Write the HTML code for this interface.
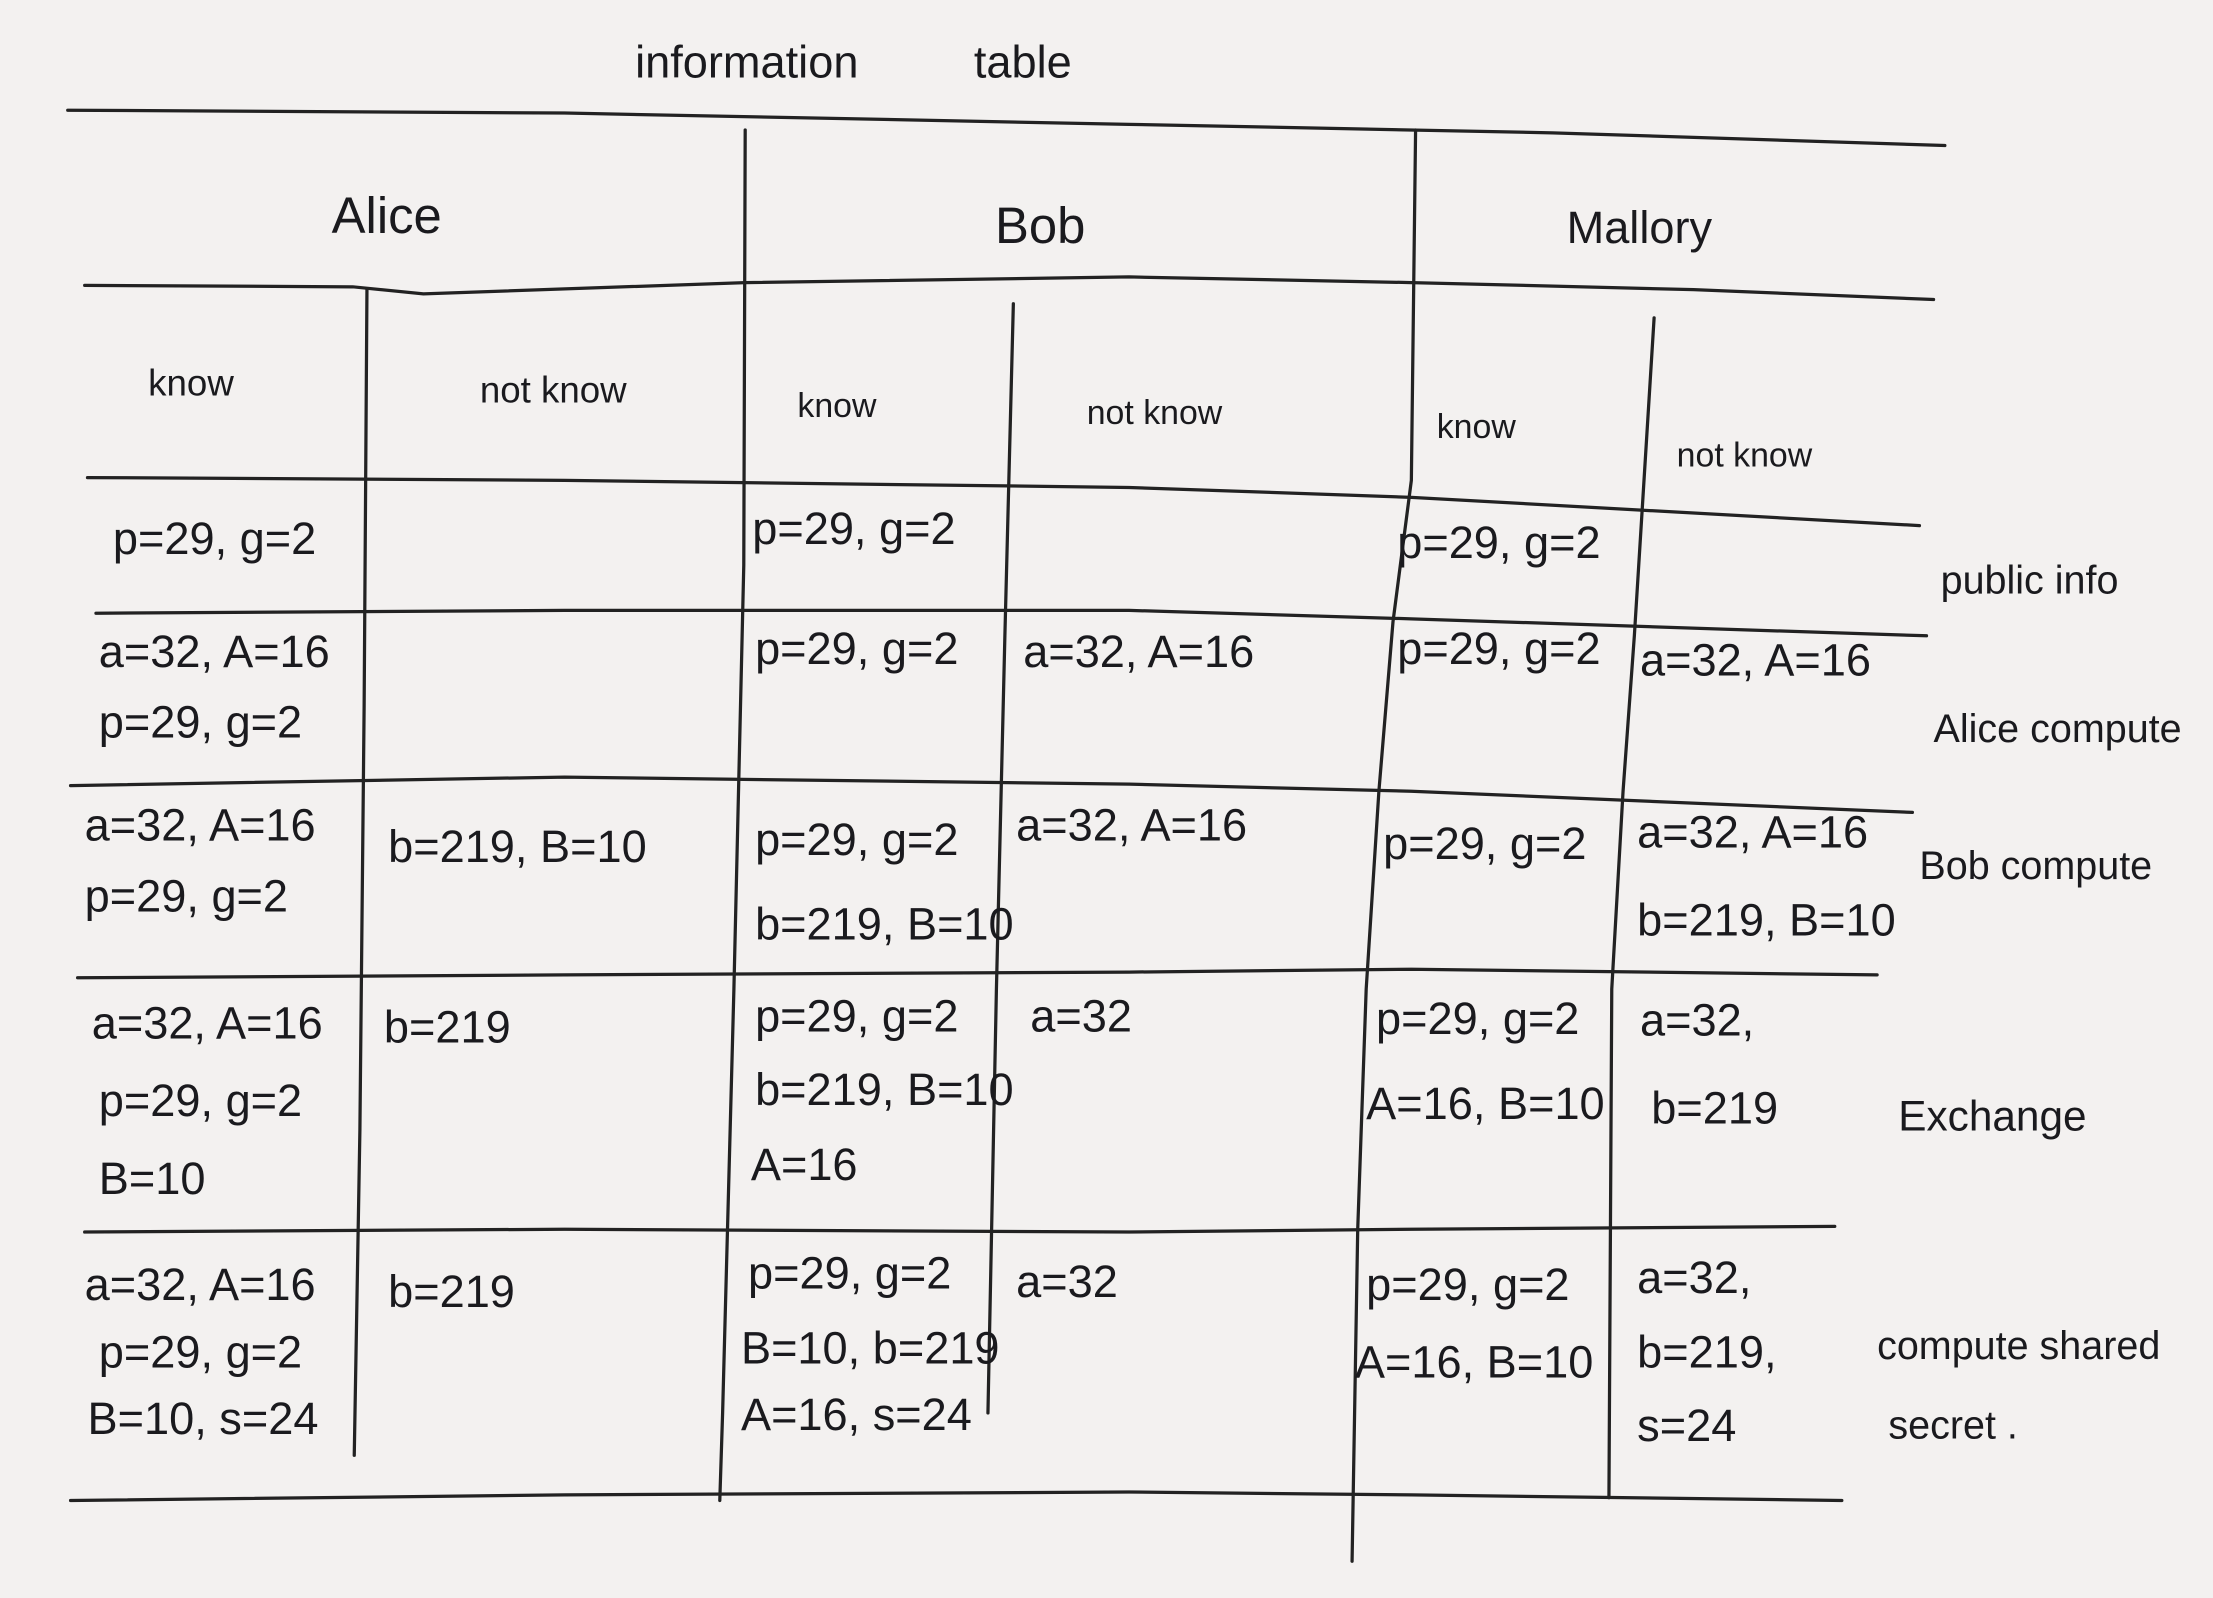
<!DOCTYPE html>
<html><head><meta charset="utf-8"><style>
html,body{margin:0;padding:0;background:#f3f1f0;}
svg{display:block}
text{font-family:"Liberation Sans",sans-serif;fill:#1a1a1e;}
</style></head><body>
<svg width="2213" height="1598" viewBox="0 0 1568 1131" preserveAspectRatio="none" xmlns="http://www.w3.org/2000/svg">
<rect width="1568" height="1131" fill="#f3f1f0"/>
<g stroke="#222" stroke-width="2.3" fill="none" stroke-linecap="round">
<polyline points="48,78 400,80 800,88 1100,94 1378,103"/>
<polyline points="60,202 250,203 300,208 528,200 800,196 1000,200 1200,205 1370,212"/>
<polyline points="62,338 400,340 800,345 1000,352 1360,372"/>
<polyline points="68,434 400,432 800,432 1000,438 1365,450"/>
<polyline points="50,556 400,550 800,555 1000,560 1355,575"/>
<polyline points="55,692 400,690 800,688 1000,686 1330,690"/>
<polyline points="60,872 400,870 800,872 1000,870 1300,868"/>
<polyline points="50,1062 400,1058 800,1056 1000,1058 1305,1062"/>
<polyline points="528,92 527,400 520,700 512,1000 510,1062"/>
<polyline points="1003,92 1000,340 987,440 977,560 968,700 962,870 958,1105"/>
<polyline points="260,205 258,500 255,800 251,1030"/>
<polyline points="718,215 712,450 706,700 700,1000"/>
<polyline points="1172,225 1158,450 1150,560 1142,700 1140,1060"/>
</g>
<g font-size="32">
<text x="450" y="55">information</text><text x="690" y="55">table</text>
<text x="235" y="165" font-size="36">Alice</text>
<text x="705" y="172" font-size="36">Bob</text>
<text x="1110" y="172" font-size="32">Mallory</text>
<text x="105" y="280" font-size="26">know</text>
<text x="340" y="285" font-size="26">not know</text>
<text x="565" y="295" font-size="24">know</text>
<text x="770" y="300" font-size="24">not know</text>
<text x="1018" y="310" font-size="24">know</text>
<text x="1188" y="330" font-size="24">not know</text>
<text x="80" y="392">p=29, g=2</text>
<text x="533" y="385">p=29, g=2</text>
<text x="990" y="395">p=29, g=2</text>
<text x="1375" y="420" font-size="28">public info</text>
<text x="70" y="472">a=32, A=16</text>
<text x="70" y="522">p=29, g=2</text>
<text x="535" y="470">p=29, g=2</text>
<text x="725" y="472">a=32, A=16</text>
<text x="990" y="470">p=29, g=2</text>
<text x="1162" y="478">a=32, A=16</text>
<text x="1370" y="525" font-size="28">Alice compute</text>
<text x="60" y="595">a=32, A=16</text>
<text x="275" y="610">b=219, B=10</text>
<text x="60" y="645">p=29, g=2</text>
<text x="535" y="605">p=29, g=2</text>
<text x="535" y="665">b=219, B=10</text>
<text x="720" y="595">a=32, A=16</text>
<text x="980" y="608">p=29, g=2</text>
<text x="1160" y="600">a=32, A=16</text>
<text x="1160" y="662">b=219, B=10</text>
<text x="1360" y="622" font-size="28">Bob compute</text>
<text x="65" y="735">a=32, A=16</text>
<text x="272" y="738">b=219</text>
<text x="70" y="790">p=29, g=2</text>
<text x="70" y="845">B=10</text>
<text x="535" y="730">p=29, g=2</text>
<text x="730" y="730">a=32</text>
<text x="535" y="782">b=219, B=10</text>
<text x="532" y="835">A=16</text>
<text x="975" y="732">p=29, g=2</text>
<text x="1162" y="733">a=32,</text>
<text x="968" y="792">A=16, B=10</text>
<text x="1170" y="795">b=219</text>
<text x="1345" y="800" font-size="30">Exchange</text>
<text x="60" y="920">a=32, A=16</text>
<text x="275" y="925">b=219</text>
<text x="70" y="968">p=29, g=2</text>
<text x="62" y="1015">B=10, s=24</text>
<text x="530" y="912">p=29, g=2</text>
<text x="720" y="918">a=32</text>
<text x="525" y="965">B=10, b=219</text>
<text x="525" y="1012">A=16, s=24</text>
<text x="968" y="920">p=29, g=2</text>
<text x="1160" y="915">a=32,</text>
<text x="960" y="975">A=16, B=10</text>
<text x="1160" y="968">b=219,</text>
<text x="1160" y="1020">s=24</text>
<text x="1330" y="962" font-size="28">compute shared</text>
<text x="1338" y="1018" font-size="28">secret .</text>
</g>
</svg>
</body></html>
